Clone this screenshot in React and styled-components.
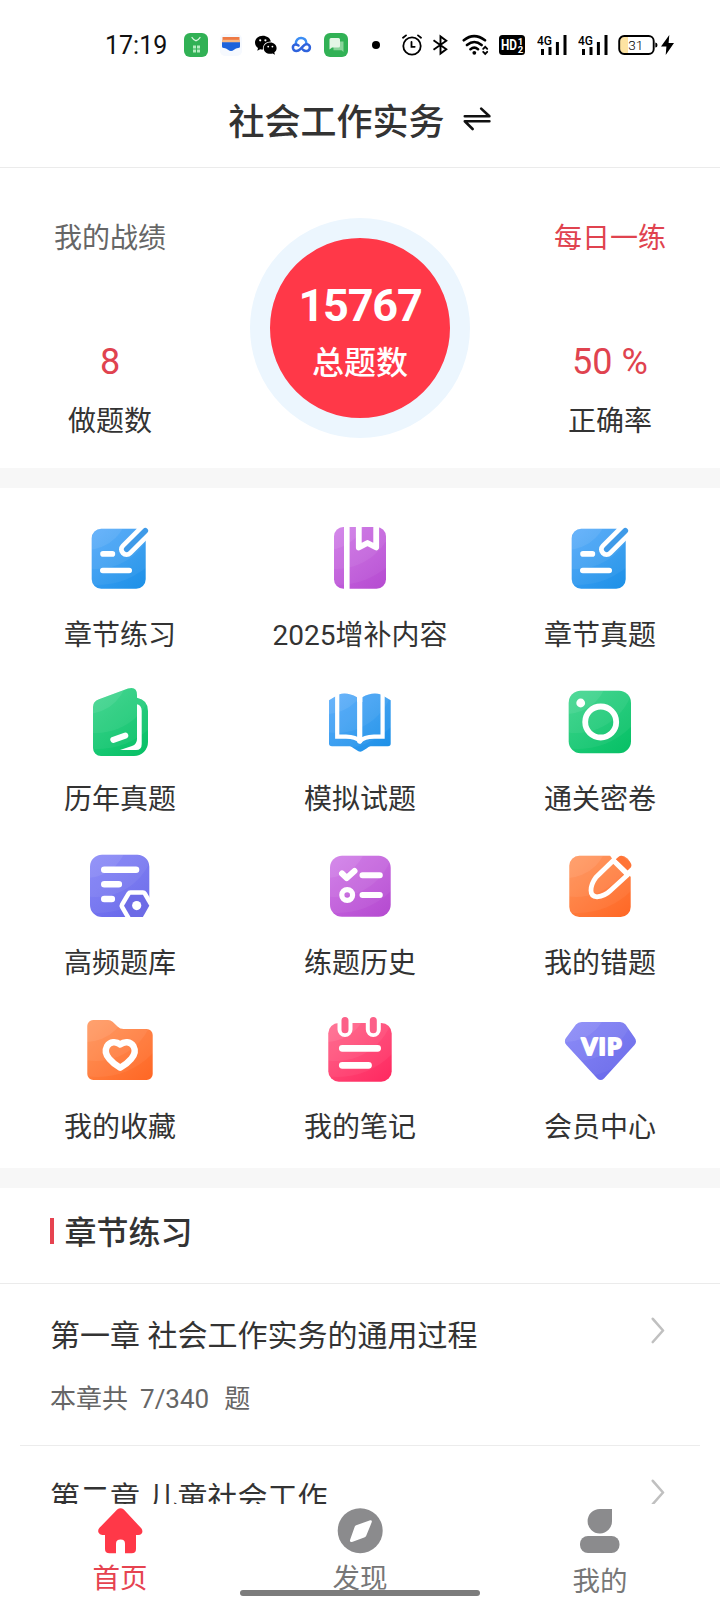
import { useId } from 'react';
import styled, { createGlobalStyle } from 'styled-components';

const GlobalStyle = createGlobalStyle`
	* {
		box-sizing: border-box;
	}
	body {
		margin: 0;
		background: #fff;
		color: #333;
		font-family: Roboto, 'Noto Sans CJK SC', sans-serif;
	}
	svg {
		display: block;
		flex: none;
	}
`;

const Screen = styled.div`
	display: flex;
	flex-direction: column;
	width: 720px;
	height: 1600px;
	overflow: hidden;
	background: #fff;
`;

const StatusBar = styled.div`
	display: flex;
	align-items: center;
	height: 78px;
	padding: 12px 0 0 105px;
`;
const Clock = styled.span`
	width: 79px;
	padding-top: 1px;
	font-size: 25px;
	line-height: 30px;
	color: #111;
`;
const Notices = styled.div`
	display: flex;
	align-items: center;
	gap: 11px;
	width: 218px;
`;
const Signals = styled.div`
	display: flex;
	align-items: center;
`;
const Signal = styled.span`
	margin-left: ${({ gap = 0 }) => gap}px;
`;

const Header = styled.header`
	display: flex;
	align-items: center;
	justify-content: center;
	gap: 18px;
	height: 90px;
	padding-right: 1px;
	padding-bottom: 8px;
	border-bottom: 1px solid #ebebeb;
`;
const Title = styled.h1`
	margin: 0;
	padding-top: 8px;
	font-size: 36px;
	line-height: 50px;
	font-weight: 500;
`;

const Stats = styled.section`
	display: flex;
	justify-content: space-between;
	height: 300px;
	padding-top: 50px;
`;
const StatColumn = styled.div`
	display: flex;
	flex-direction: column;
	align-items: center;
	width: 220px;
	padding-top: 1px;
`;
const StatLink = styled.span`
	font-size: 28px;
	line-height: 40px;
	color: ${({ accent }) => (accent ? '#e0434f' : '#666')};
`;
const StatValue = styled.span`
	margin-top: 80px;
	font-size: 36px;
	line-height: 46px;
	color: #e0434f;
`;
const StatLabel = styled.span`
	margin-top: 17px;
	font-size: 28px;
	line-height: 40px;
`;
const Total = styled.div`
	display: flex;
	flex-direction: column;
	align-items: center;
	width: 220px;
	height: 220px;
	padding-top: 41px;
	border: 20px solid #ecf6fe;
	border-radius: 50%;
	background: #ff3848;
	color: #fff;
`;
const TotalNumber = styled.span`
	font-size: 45px;
	line-height: 54px;
	font-weight: 700;
	letter-spacing: -1.2px;
`;
const TotalLabel = styled.span`
	margin-top: 8px;
	font-size: 32px;
	line-height: 44px;
	font-weight: 500;
`;

const Band = styled.div`
	flex: none;
	height: 20px;
	background: #f7f7f7;
`;

const Menu = styled.nav`
	display: grid;
	flex: none;
	grid-template-columns: repeat(3, 240px);
	grid-auto-rows: 164px;
	height: 680px;
	padding-top: 30px;
`;
const MenuItem = styled.a`
	display: flex;
	flex-direction: column;
	align-items: center;
	gap: 18px;
	font-size: 28px;
	line-height: 40px;
`;

const Chapters = styled.section`
	flex: 1;
	min-height: 0;
	overflow: hidden;
`;
const SectionTitle = styled.h2`
	display: flex;
	align-items: center;
	gap: 10.5px;
	height: 96px;
	margin: 0;
	padding: 0 50px 5px;
	border-bottom: 1px solid #ebebeb;
	font-size: 32px;
	line-height: 44px;
	font-weight: 500;
	&:before {
		content: '';
		width: 4px;
		height: 26px;
		margin-bottom: 4px;
		background: #e64350;
	}
`;
const Chapter = styled.article`
	display: flex;
	justify-content: space-between;
	height: 162px;
	margin: 0 20px;
	padding: 30px 35px 0 30px;
	border-bottom: 1px solid #ececec;
	svg {
		margin-top: 2px;
	}
`;
const ChapterName = styled.h3`
	margin: 0;
	font-size: 30px;
	line-height: 44px;
	font-weight: 400;
`;
const ChapterCount = styled.p`
	margin: 21px 0 0;
	font-size: 26px;
	line-height: 40px;
	color: #666;
	span {
		margin: 0 15px 0 12px;
	}
`;

const TabBar = styled.footer`
	position: relative;
	display: flex;
	flex: none;
	height: 96px;
	background: #fff;
`;
const Tab = styled.a`
	display: flex;
	flex-direction: column;
	align-items: center;
	gap: ${({ gap = 5 }) => gap}px;
	width: 240px;
	padding-top: 4px;
	font-size: 27.5px;
	line-height: 40px;
	color: ${({ active }) => (active ? '#e64350' : '#777')};
`;
const HomeIndicator = styled.div`
	position: absolute;
	left: 240px;
	bottom: 4px;
	width: 240px;
	height: 6px;
	border-radius: 3px;
	background: #7c7c7c;
`;

const PALETTE = {
	blue: ['#4aa5fb', '#1c90e6'],
	purple: ['#cc6fe6', '#b54bd0'],
	green: ['#2bd283', '#08c066'],
	indigo: ['#7d7df8', '#6767e8'],
	orange: ['#ff8d4f', '#ff6826'],
	pink: ['#ff5a82', '#ff2a61']
};

// Coloured base shape with soft round highlights, white details on top
function Tile({ color, shape, children }) {
	const id = useId();
	const [from, to] = PALETTE[color];
	return (
		<svg width="80" height="80" viewBox="0 0 80 80" fill="none" strokeLinecap="round" strokeLinejoin="round">
			<defs>
				<linearGradient id={`${id}g`} gradientUnits="userSpaceOnUse" x1="14" y1="10" x2="66" y2="72">
					<stop stopColor={from} />
					<stop offset="1" stopColor={to} />
				</linearGradient>
				<clipPath id={`${id}c`}>
					<path d={shape} />
				</clipPath>
			</defs>
			<g clipPath={`url(#${id}c)`}>
				<rect width="80" height="80" fill={`url(#${id}g)`} />
				<circle cx="18" cy="-8" r="75" fill="#fff" opacity=".05" />
				<circle cx="16" cy="-8" r="59" fill="#fff" opacity=".06" />
				<circle cx="6" cy="-10" r="42" fill="#fff" opacity=".08" />
			</g>
			{children}
		</svg>
	);
}

const rect = (x1, y1, x2, y2, r) =>
	`M${x1 + r} ${y1}H${x2 - r}A${r} ${r} 0 0 1 ${x2} ${y1 + r}V${y2 - r}A${r} ${r} 0 0 1 ${x2 - r} ${y2}H${x1 + r}A${r} ${r} 0 0 1 ${x1} ${y2 - r}V${y1 + r}A${r} ${r} 0 0 1 ${x1 + r} ${y1}Z`;

const EditTile = () => (
	<Tile color="blue" shape={rect(11.7, 10.7, 65.7, 70.7, 9.5)}>
		<path d="M46.5 31.5 68 10" stroke="#fff" strokeWidth="15" />
		<path d="M46.7 31.3 65.3 12.7" stroke="#3f9ae8" strokeWidth="5.6" />
		<path d="M23 35.9H32.4M22.8 52.5H49.2" stroke="#fff" strokeWidth="5.6" />
	</Tile>
);
const BookmarkTile = () => (
	<Tile color="purple" shape={rect(14, 9, 66, 70.7, 9.5)}>
		<path d="M26.8 6V74" stroke="#fff" strokeWidth="5.6" strokeLinecap="butt" />
		<path d="M38.8 8V29.5L47.5 25L56.2 29.5V8" stroke="#fff" strokeWidth="5.8" />
	</Tile>
);
const AlbumTile = () => (
	<Tile
		color="green"
		shape="M19 17.3 48 6.6Q57 4 57 13V15.8Q68 18 68 29V60A14 14 0 0 1 54 74H21A8 8 0 0 1 13 66V25Q13 19.3 19 17.3Z"
	>
		<path d="M57 22.3Q61.7 23.5 61.7 29V62Q61.7 68 56 68H40L52 64Q57 62.2 57 57Z" fill="#fff" />
		<path d="M33.3 57.8 45.3 53.6" stroke="#fff" strokeWidth="6" />
	</Tile>
);
const BookTile = () => (
	<Tile
		color="blue"
		shape="M9 18.2 18.7 12.4Q27 9.5 37 15.2V20H42.3V15.2Q52 9.5 61 12.4L70.7 18.2V61.5Q70.7 64.3 68 64.3H50.5Q48.5 64.5 46.5 66.5L42 69.3Q40.2 70.2 38.4 69.3L34 66.5Q31.5 64.5 30 64.3H12Q9 64.3 9 61.5Z"
	>
		<path
			d="M17.2 10V54.7H26Q36 55 40 59Q44 55 54 54.7H62.6V10"
			stroke="#fff"
			strokeWidth="4.2"
			strokeLinejoin="miter"
			strokeLinecap="butt"
		/>
		<path d="M39.7 10V59" stroke="#fff" strokeWidth="5.2" />
	</Tile>
);
const CameraTile = () => (
	<Tile color="green" shape={rect(8.7, 8.7, 71, 71.3, 12)}>
		<circle cx="20.7" cy="21" r="4.4" fill="#fff" />
		<circle cx="40.7" cy="40" r="15.5" stroke="#fff" strokeWidth="5.8" />
	</Tile>
);
const ConfigTile = () => (
	<Tile color="indigo" shape={rect(10, 8.7, 69.3, 71, 12)}>
		<path d="M24.3 23.7H56M24.3 38.3H38.8M24.3 53H31.8" stroke="#fff" strokeWidth="6.6" />
		<path
			d="M50.5 48.7H62.9L69.3 59.7L62.9 71H50.5L44 59.7Z"
			fill="#6d6be6"
			stroke="#fff"
			strokeWidth="9"
			paintOrder="stroke"
		/>
		<path d="M38 71.2H75V80H38Z" fill="#fff" />
		<circle cx="56.7" cy="59.6" r="4.6" fill="#fff" />
	</Tile>
);
const ChecklistTile = () => (
	<Tile color="purple" shape={rect(10, 9.7, 70.7, 70.7, 12)}>
		<path d="M22 27.5 26.7 32 34.5 25M42.5 29.3H59.8M42.5 49H59.8" stroke="#fff" strokeWidth="6" />
		<circle cx="27.2" cy="49" r="5.4" stroke="#fff" strokeWidth="5.2" />
	</Tile>
);
const PencilTile = () => (
	<Tile color="orange" shape={rect(9.3, 9.7, 70.7, 71, 10)}>
		<path d="M49 8 57 5 76 22 73 32 68 29 53 14Z" fill="#fff" />
		<path d="M58.3 11Q61 8.7 64 10.7L70 16Q72.5 19 70.7 21.5L67.6 24.6 55.8 13.2Z" fill="#ff7437" />
		<path
			d="M53.3 14.5 36 31.3Q31 38 31 44.5Q31 50.5 37 50.8Q45 50 50.5 44.5L67.7 28.7Z"
			stroke="#fff"
			strokeWidth="4.8"
		/>
	</Tile>
);
const FavoriteTile = () => (
	<Tile
		color="orange"
		shape="M13.3 10H28Q30.5 10 32.5 11.8L37.5 16.5Q40 19 43.5 19H66.7A6 6 0 0 1 72.7 25V64A6 6 0 0 1 66.7 70H13.3A6 6 0 0 1 7.3 64V16A6 6 0 0 1 13.3 10Z"
	>
		<path
			d="M40.2 34.5C36 31 30 31.5 27 36.3C24.5 41 26.3 45.5 29.3 48.8C32.5 52.5 36.5 55.7 40.2 57.8C44 55.7 48 52.5 51.2 48.8C54.2 45.5 56 41 53.5 36.3C50.5 31.5 44.5 31 40.2 34.5Z"
			stroke="#fff"
			strokeWidth="6.4"
		/>
	</Tile>
);
const NotesTile = () => (
	<Tile color="pink" shape={rect(8.3, 13, 71.7, 71.7, 10.5)}>
		<path d="M25 8V19.5M53.3 8V19.5" stroke="#fff" strokeWidth="15" />
		<path d="M25 10.5V19.8M53.3 10.5V19.8" stroke="#fc6088" strokeWidth="7" />
		<path d="M22.3 38.3H57.6M22.3 55.3H48.5" stroke="#fff" strokeWidth="6.8" />
	</Tile>
);
const VipTile = () => (
	<Tile
		color="indigo"
		shape="M22 12H60Q63.5 12 65.5 14.5L74.5 27.5Q77.5 31.5 74.5 35L44 68.5Q40.7 71.5 37.3 68.5L6.5 35Q3.5 31.5 6 28L16 14.5Q18 12 22 12Z"
	>
		<text
			x="41.4"
			y="45.2"
			textAnchor="middle"
			textLength="40"
			fontFamily="Lato"
			fontSize="22.5"
			fontWeight="900"
			fill="#fff"
			stroke="#fff"
			strokeWidth="2"
		>
			VIP
		</text>
	</Tile>
);

const SwapIcon = () => (
	<svg width="28" height="24" viewBox="0 0 28 24" fill="none" stroke="#111" strokeWidth="2.6" strokeLinecap="round" strokeLinejoin="round">
		<path d="M1.8 9.3H26.4L18.2 1.6M26.4 14.3H1.8L9.6 22" />
	</svg>
);
const Chevron = () => (
	<svg width="14" height="28" viewBox="0 0 14 28" fill="none" stroke="#c0c0c0" strokeWidth="2.6" strokeLinecap="round" strokeLinejoin="round">
		<path d="M1.8 2.8 12 14.5 1.8 26" />
	</svg>
);

const BagIcon = () => (
	<svg width="24" height="24" viewBox="0 0 24 24" fill="none">
		<rect width="24" height="24" rx="6" fill="#31b155" />
		<path d="M8 4.5Q12 11 16 4.5" stroke="#d9f5df" strokeWidth="1.4" strokeLinecap="round" />
		<path d="M9 12.5H12V15.5H9ZM13 12.5H16V15.5H13ZM9 16.5H12V19.5H9ZM13 16.5H16V19.5H13Z" fill="#b4ecc0" />
	</svg>
);
const WalletIcon = () => (
	<svg width="24" height="24" viewBox="0 0 24 24" fill="none">
		<rect x="1" y="1" width="22" height="22" rx="5" fill="#f6f9fe" />
		<path d="M3.5 4H20.5V7H3.5Z" fill="#ee7a45" />
		<path d="M3 6.8H21V9.8H3Z" fill="#f6b884" />
		<path d="M3 9.3H21V13.5Q21 15 19 15Q17 15 15 16.8Q12 19.4 9 16.8Q7 15 5 15Q3 15 3 13.5Z" fill="#1d63dc" />
	</svg>
);
const WechatIcon = () => (
	<svg width="24" height="24" viewBox="0 0 24 24">
		<path d="M8.8 2.8C4.3 2.8 1 5.8 1 9.6C1 12 2.3 13.8 4 15L3.3 17.8L6.2 16.2Q7.5 16.6 9 16.5C8.3 12 12 8.4 16.9 8.5C16 5 12.8 2.8 8.8 2.8Z" />
		<path d="M16.2 9.5C12.3 9.5 9.7 12 9.7 15.2C9.7 18.5 12.5 20.8 16.2 20.8Q17.5 20.8 18.6 20.4L21 21.7L20.3 19.4C21.7 18.4 22.6 17 22.6 15.2C22.6 12 20 9.5 16.2 9.5Z" />
		<g fill="#fff">
			<circle cx="6.2" cy="7.3" r="1.1" />
			<circle cx="11.4" cy="7.3" r="1.1" />
			<circle cx="14.2" cy="13.6" r=".9" />
			<circle cx="18.4" cy="13.6" r=".9" />
		</g>
	</svg>
);
const CloudIcon = () => (
	<svg width="24" height="24" viewBox="0 0 24 24" fill="none" strokeWidth="2.5" strokeLinecap="round">
		<path d="M6.8 11C6.2 3.2 17.6 3 17.4 10.3" stroke="#3b8df4" />
		<path d="M9.5 12.5C5.8 10.2 3.2 12.5 4.1 15.6C5.3 19 9 18.6 11.3 16.2L14.7 12.6C17 10 21 11.3 20.9 14.7C20.6 18.6 16.2 19 13.9 16.6" stroke="#2f63dd" />
	</svg>
);
const ChatIcon = () => (
	<svg width="24" height="24" viewBox="0 0 24 24">
		<rect width="24" height="24" rx="6" fill="#31b155" />
		<path d="M13.5 8.5H19.5V19L17.5 17.2H9.5V14Z" fill="#8ad49b" />
		<path d="M7 5H14.5Q16 5 16 6.5V13Q16 14.5 14.5 14.5H8L5.5 16.5V6.5Q5.5 5 7 5Z" fill="#e4f6e6" />
	</svg>
);
const Dot = styled.span`
	width: 8px;
	height: 8px;
	margin-left: 13px;
	border-radius: 50%;
	background: #000;
`;

const AlarmIcon = () => (
	<svg width="20" height="22" viewBox="0 0 20 22" fill="none" stroke="#000" strokeWidth="1.8" strokeLinecap="round">
		<circle cx="10" cy="12" r="8.7" />
		<path d="M9.5 8V12.8H12.7M1 3.8 4 1.4M19 3.8 16 1.4" />
	</svg>
);
const BluetoothIcon = () => (
	<svg width="16" height="22" viewBox="0 0 16 22" fill="none" stroke="#000" strokeWidth="1.9" strokeLinejoin="miter">
		<path d="M1.5 6.2 14.3 15.2 8.5 19.6V2.4L14.3 6.8 1.5 15.8" />
	</svg>
);
const WifiIcon = () => (
	<svg width="27" height="22" viewBox="0 0 27 22" fill="none" stroke="#000" strokeWidth="2.6" strokeLinecap="round">
		<path d="M1.8 6.3Q12 -2 23 6.3M5 11Q12.3 5 19.6 11M8.5 15.2Q12.3 12.2 16 15.2" />
		<circle cx="12.3" cy="18.8" r="1.9" fill="#000" stroke="none" />
		<path d="M21.2 14.8 23.2 12.8 25.2 14.8M21.2 17.8 23.2 19.8 25.2 17.8" strokeWidth="1.9" />
	</svg>
);
const HdIcon = () => (
	<svg width="26" height="20" viewBox="0 0 26 20" fontFamily="Roboto" fontWeight="700" fill="#fff">
		<rect width="26" height="20" rx="3.5" fill="#000" />
		<text x="2" y="15" fontSize="14" textLength="16" lengthAdjust="spacingAndGlyphs">HD</text>
		<text x="18.8" y="9.8" fontSize="9.5">1</text>
		<text x="18.8" y="17.6" fontSize="9.5">2</text>
	</svg>
);
const CellIcon = () => (
	<svg width="30" height="22" viewBox="0 0 30 22" stroke="#000" strokeWidth="3">
		<text x="0" y="11" fontFamily="Roboto" fontSize="13" fontWeight="500" textLength="15" lengthAdjust="spacingAndGlyphs" stroke="none">
			4G
		</text>
		<path d="M5.5 15V21M13 13V21M20.4 8V21M28 1V21" />
	</svg>
);
const BatteryIcon = () => (
	<svg width="40" height="22" viewBox="0 0 40 22">
		<rect x="1.2" y="2" width="34.5" height="18" rx="5" fill="#fff" />
		<path d="M10 3H6Q2 3 2 7V15Q2 19 6 19H10Z" fill="#fde3a2" />
		<rect x="1.2" y="2" width="34.5" height="18" rx="5" fill="none" stroke="#000" strokeWidth="1.9" />
		<path d="M37.3 8.5Q39.5 8.5 39.5 11T37.3 13.5Z" />
		<text x="17.8" y="15.7" textAnchor="middle" fontFamily="Roboto" fontSize="13.5" fontWeight="300">31</text>
	</svg>
);
const BoltIcon = () => (
	<svg width="13" height="20" viewBox="0 0 13 20">
		<path d="M8.3 0 0 11.5H5.4L4.7 20 13 8H7.6Z" />
	</svg>
);

const HomeIcon = () => (
	<svg width="46" height="46" viewBox="0 0 46 46" fill="#ff3848">
		<path d="M20.2 1.6Q23.5 -.9 26.8 1.6L44.3 20.3Q46.3 23.3 44.7 25.5Q43.3 27 41.2 27H39V41Q39 45.3 34.6 45.3H28V35.7Q28 31.5 23.7 31.5Q19 31.5 19 35.7V45.3H12.6Q8 45.3 8 41V27H5.2Q2.5 27 1.5 24.6Q.5 22 2.5 19.8Z" />
	</svg>
);
const DiscoverIcon = () => (
	<svg width="46" height="46" viewBox="0 0 46 46">
		<circle cx="23.2" cy="22.7" r="22.5" fill="#8b8b8d" />
		<path d="M19.2 17.2 33.2 12.2Q35.6 12 34.6 14.6L29 28.2Q28.2 29.2 27.2 29.6L15 34Q12.2 34.3 13.2 31.5L17.8 18.6Q18.2 17.7 19.2 17.2Z" fill="#fff" />
	</svg>
);
const MineIcon = () => (
	<svg width="46" height="46" viewBox="0 0 46 46" fill="#8b8b8d">
		<path d="M35 1V13A12.2 12.2 0 1 1 22.8 1Z" />
		<rect x="3" y="28" width="39.5" height="17" rx="8" />
	</svg>
);

const SIGNALS = [
	[AlarmIcon, 0],
	[BluetoothIcon, 10],
	[WifiIcon, 14],
	[HdIcon, 10],
	[CellIcon, 12],
	[CellIcon, 11],
	[BatteryIcon, 10],
	[BoltIcon, 3]
];

const MENU = [
	[EditTile, '章节练习'],
	[BookmarkTile, '2025增补内容'],
	[EditTile, '章节真题'],
	[AlbumTile, '历年真题'],
	[BookTile, '模拟试题'],
	[CameraTile, '通关密卷'],
	[ConfigTile, '高频题库'],
	[ChecklistTile, '练题历史'],
	[PencilTile, '我的错题'],
	[FavoriteTile, '我的收藏'],
	[NotesTile, '我的笔记'],
	[VipTile, '会员中心']
];

const CHAPTERS = [
	{ name: '第一章 社会工作实务的通用过程', done: '7/340' },
	{ name: '第二章 儿童社会工作' }
];

export default function App() {
	return (
		<Screen>
			<GlobalStyle />
			<StatusBar>
				<Clock>17:19</Clock>
				<Notices>
					<BagIcon />
					<WalletIcon />
					<WechatIcon />
					<CloudIcon />
					<ChatIcon />
					<Dot />
				</Notices>
				<Signals>
					{SIGNALS.map(([Icon, gap], i) => (
						<Signal key={i} gap={gap}>
							<Icon />
						</Signal>
					))}
				</Signals>
			</StatusBar>
			<Header>
				<Title>社会工作实务</Title>
				<SwapIcon />
			</Header>
			<Stats>
				<StatColumn>
					<StatLink>我的战绩</StatLink>
					<StatValue>8</StatValue>
					<StatLabel>做题数</StatLabel>
				</StatColumn>
				<Total>
					<TotalNumber>15767</TotalNumber>
					<TotalLabel>总题数</TotalLabel>
				</Total>
				<StatColumn>
					<StatLink accent="true">每日一练</StatLink>
					<StatValue>50 %</StatValue>
					<StatLabel>正确率</StatLabel>
				</StatColumn>
			</Stats>
			<Band />
			<Menu>
				{MENU.map(([Icon, label]) => (
					<MenuItem key={label}>
						<Icon />
						{label}
					</MenuItem>
				))}
			</Menu>
			<Band />
			<Chapters>
				<SectionTitle>章节练习</SectionTitle>
				{CHAPTERS.map(({ name, done }) => (
					<Chapter key={name}>
						<div>
							<ChapterName>{name}</ChapterName>
							{done && (
								<ChapterCount>
									本章共<span>{done}</span>题
								</ChapterCount>
							)}
						</div>
						<Chevron />
					</Chapter>
				))}
			</Chapters>
			<TabBar>
				<Tab active="true">
					<HomeIcon />
					首页
				</Tab>
				<Tab>
					<DiscoverIcon />
					发现
				</Tab>
				<Tab gap={8}>
					<MineIcon />
					我的
				</Tab>
				<HomeIndicator />
			</TabBar>
		</Screen>
	);
}
